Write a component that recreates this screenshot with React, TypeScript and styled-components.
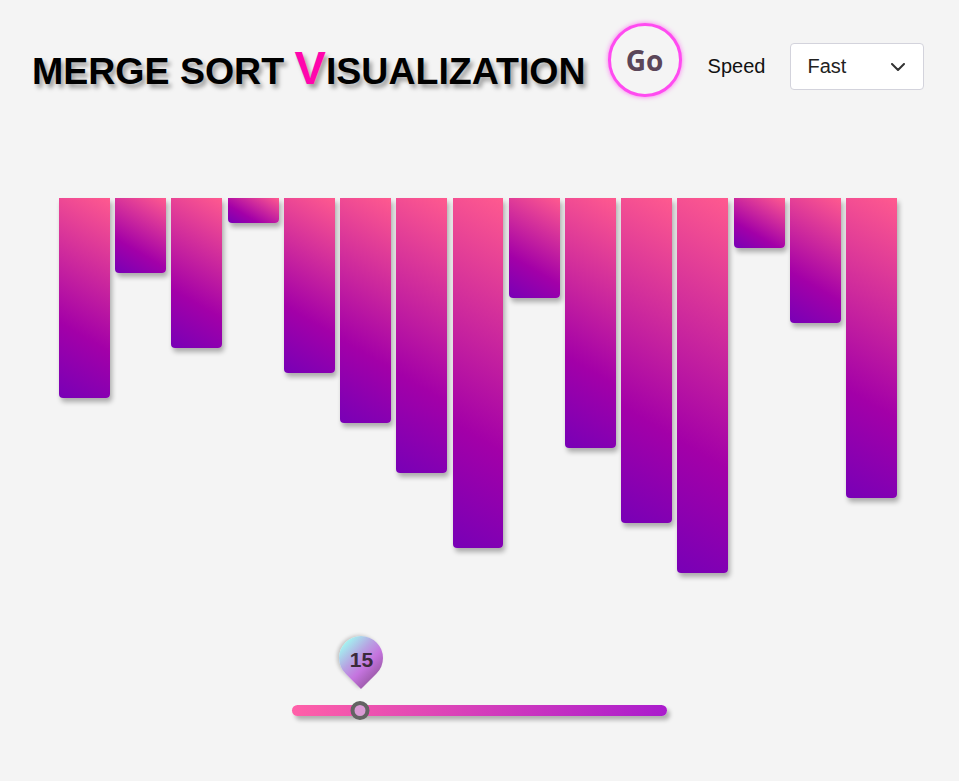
import React from "react";
import styled, { createGlobalStyle } from "styled-components";

const Global = createGlobalStyle`
  html, body { margin: 0; padding: 0; background: #f4f4f4; }
  body { font-family: "Liberation Sans", Arial, sans-serif; min-height: 781px; }
`;

const Page = styled.div`
  width: 959px;
  height: 781px;
  background: #f4f4f4;
  overflow: hidden;
`;

const Header = styled.header`
  display: flex;
  align-items: flex-start;
  height: 98px;
  padding-left: 32px;
`;

const Title = styled.h1`
  margin: 44px 0 0 0;
  font-family: "Liberation Sans", Arial, sans-serif;
  font-weight: 700;
  font-size: 37.5px;
  line-height: 1;
  color: #000;
  white-space: nowrap;
  text-shadow: 3px 4px 4px rgba(0, 0, 0, 0.35);
`;

const BigLetter = styled.span`
  font-size: 47px;
  color: #ff06ad;
`;

const GoButton = styled.button`
  margin: 23px 0 0 22px;
  width: 74px;
  height: 74px;
  border-radius: 50%;
  border: 3px solid #ff4bf0;
  box-shadow: 0 0 5px rgba(255, 80, 240, 0.8);
  background: #f4f4f4;
  color: #5b4659;
  font-family: "Open Sans", "Noto Sans", sans-serif;
  font-weight: 700;
  font-size: 28px;
  padding: 0;
  display: flex;
  align-items: center;
  justify-content: center;
  cursor: pointer;
`;

const SpeedLabel = styled.span`
  margin: 56px 0 0 26px;
  font-size: 20px;
  line-height: 1;
  color: #111;
`;

const SelectBox = styled.div`
  margin: 43px 0 0 25px;
  width: 134px;
  height: 47px;
  box-sizing: border-box;
  background: #fff;
  border: 1px solid #d3d3dc;
  border-radius: 4px;
  display: flex;
  align-items: center;
  justify-content: space-between;
  padding: 0 18px 0 16px;
  font-size: 20px;
  color: #222;
`;

const Bars = styled.div`
  display: grid;
  grid-template-columns: repeat(15, 1fr);
  column-gap: 5.25px;
  align-items: start;
  width: 838px;
  margin: 100px 0 0 59px;
`;

const Bar = styled.div<{ $h: number }>`
  height: ${(p) => p.$h}px;
  border-radius: 0 0 4px 4px;
  background: linear-gradient(30deg, #7800b6 0%, #a300a8 33%, #ff5a8f 100%);
  box-shadow: 2px 4px 5px rgba(0, 0, 0, 0.3);
`;

const SliderArea = styled.div`
  position: relative;
  width: 375px;
  margin: 132px auto 0 auto;
`;

const Track = styled.div`
  height: 11px;
  border-radius: 6px;
  background: linear-gradient(to right, #ff60a8, #aa1ccd);
  box-shadow: 3px 4px 4px rgba(0, 0, 0, 0.28);
`;

const Thumb = styled.div`
  position: absolute;
  top: -4px;
  width: 19px;
  height: 19px;
  box-sizing: border-box;
  border-radius: 50%;
  border: 4px solid #636363;
  background: #d99ad4;
  transform: translateX(-50%);
`;

const Bubble = styled.div`
  position: absolute;
  top: -69px;
  width: 44px;
  height: 44px;
  border-radius: 50% 50% 0 50%;
  transform: translateX(-50%) rotate(45deg);
  background: linear-gradient(to right, #a3f2f0 0%, #b7a3e2 40%, #c574df 70%, #a15db0 100%);
  box-shadow: -2px 1px 4px rgba(0, 0, 0, 0.2);
  display: flex;
  align-items: center;
  justify-content: center;
`;

const BubbleText = styled.span`
  transform: rotate(-45deg);
  font-weight: 700;
  font-size: 21px;
  color: #3b2a3b;
  margin: 2px 0 0 3px;
`;

const values = [8, 3, 6, 1, 7, 9, 11, 14, 4, 10, 13, 15, 2, 5, 12];

export default function App() {
  const pct = 68;
  return (
    <Page>
      <Global />
      <Header>
        <Title>
          MERGE SORT <BigLetter>V</BigLetter>ISUALIZATION
        </Title>
        <GoButton>Go</GoButton>
        <SpeedLabel>Speed</SpeedLabel>
        <SelectBox>
          <span>Fast</span>
          <svg width="14" height="8" viewBox="0 0 14 8">
            <polyline points="1,1 7,7 13,1" fill="none" stroke="#333" strokeWidth="2" strokeLinecap="round" strokeLinejoin="round" />
          </svg>
        </SelectBox>
      </Header>
      <Bars>
        {values.map((v, i) => (
          <Bar key={i} $h={v * 25} />
        ))}
      </Bars>
      <SliderArea>
        <Track />
        <Bubble style={{ left: pct + 1 }}>
          <BubbleText>15</BubbleText>
        </Bubble>
        <Thumb style={{ left: pct }} />
      </SliderArea>
    </Page>
  );
}
